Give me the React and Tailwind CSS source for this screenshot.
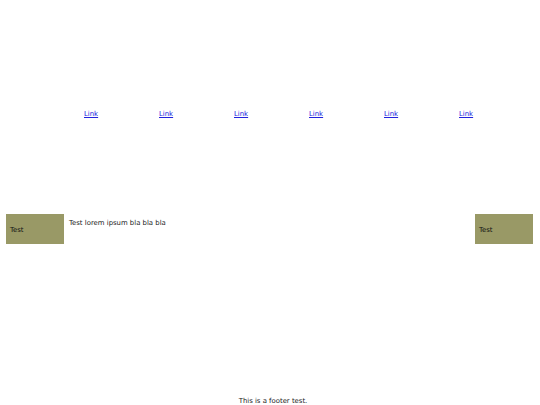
import React from 'react';

const links = ['Link', 'Link', 'Link', 'Link', 'Link', 'Link'];

const Box = () => (
  <div className="w-[58px] h-[30px] shrink-0 bg-[#999966] flex items-center px-[4px] pt-[2px] text-[#111]">
    Test
  </div>
);

export default function App() {
  return (
    <div
      className="w-[540px] h-[405px] bg-white text-[6.9px] leading-[8px] text-[#222] flex flex-col"
      style={{ fontFamily: '"DejaVu Sans", Verdana, sans-serif' }}
    >
      {/* Nav */}
      <nav className="flex pl-[84px] pt-[110px]">
        {links.map((l, i) => (
          <div key={i} className="w-[75px] shrink-0">
            <a href="#" className="text-[#2222dd] underline">{l}</a>
          </div>
        ))}
      </nav>

      {/* Content */}
      <div className="flex pl-[6px] pr-[7px] pt-[96px] gap-[5px]">
        <Box />
        <div className="flex-1 pt-[5px]">Test lorem ipsum bla bla bla</div>
        <Box />
      </div>

      {/* Footer */}
      <footer className="mt-auto pl-[6px] text-center">This is a footer test.</footer>
    </div>
  );
}
